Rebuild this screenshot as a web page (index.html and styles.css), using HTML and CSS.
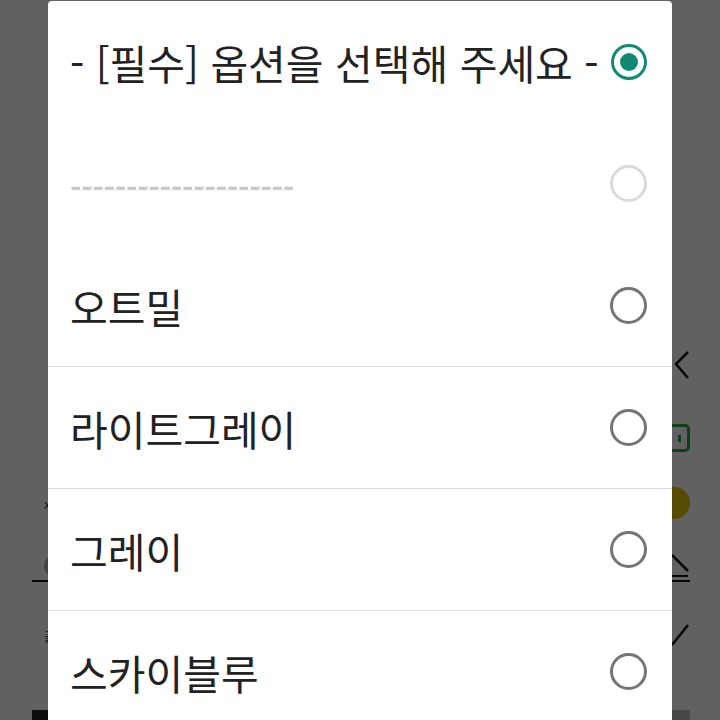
FILE: index.html
```html
<!DOCTYPE html>
<html lang="ko">
<head>
  <meta charset="UTF-8">
  <meta name="viewport" content="width=device-width, initial-scale=1.0">
  <title>옵션 선택</title>
  <link rel="stylesheet" href="styles.css">
</head>
<body>

  <div class="page">
    <div class="page-row row-a">
      <span class="note">&nbsp;</span>
      <svg class="chev" width="16" height="32" viewBox="0 0 16 32"><path d="M14 2 L2 14 L14 28" fill="none" stroke="#111" stroke-width="2.5"/></svg>
    </div>
    <div class="page-row row-b">
      <span class="note">&nbsp;</span>
      <span class="coupon"><span class="coupon-dot"></span></span>
    </div>
    <div class="page-row row-c">
      <span class="note small">x</span>
      <span class="sun"></span>
    </div>
    <div class="page-row row-d">
      <span class="avatar"></span>
      <svg class="chev" width="18" height="26" viewBox="0 0 18 26"><path d="M0 2 L16 18" fill="none" stroke="#111" stroke-width="2.5"/><path d="M0 23 L16 23" stroke="#111" stroke-width="2"/></svg>
    </div>
    <div class="rule"></div>
    <div class="page-row row-e">
      <span class="note small">출</span>
      <svg class="chev" width="18" height="24" viewBox="0 0 18 24"><path d="M16 2 L0 22" fill="none" stroke="#111" stroke-width="2.5"/></svg>
    </div>
    <div class="page-row row-f">
      <span class="bar"></span>
      <span class="bar light"></span>
    </div>
  </div>

  <div class="dim"></div>

  <div class="dialog">
    <div class="option">
      <span class="label">- [필수] 옵션을 선택해 주세요 -</span>
      <span class="radio checked"></span>
    </div>
    <div class="option">
      <span class="label dashes">--------------------</span>
      <span class="radio disabled"></span>
    </div>
    <div class="option lined">
      <span class="label">오트밀</span>
      <span class="radio"></span>
    </div>
    <div class="option lined">
      <span class="label">라이트그레이</span>
      <span class="radio"></span>
    </div>
    <div class="option lined">
      <span class="label">그레이</span>
      <span class="radio"></span>
    </div>
    <div class="option">
      <span class="label">스카이블루</span>
      <span class="radio"></span>
    </div>
  </div>

</body>
</html>
```

FILE: styles.css
```css
body {
  margin: 0;
  width: 720px;
  height: 720px;
  overflow: hidden;
  position: relative;
  background: #fff;
  font-family: "Noto Sans CJK KR", "Noto Sans", sans-serif;
}

/* page behind the dialog */
.page {
  display: flex;
  flex-direction: column;
  padding: 348px 30px 0 32px;
}
.page-row {
  display: flex;
  justify-content: space-between;
  align-items: center;
}
.row-a { height: 36px; }
.row-b { height: 28px; margin-top: 40px; }
.row-c { height: 34px; margin-top: 34px; }
.row-d { height: 28px; margin-top: 32px; }
.row-e { height: 26px; margin-top: 40px; }
.row-f { height: 10px; margin-top: 62px; align-items: stretch; }
.rule {
  height: 2px;
  background: #111;
}
.note {
  font-size: 12px;
  color: #333;
  margin-left: 12px;
}
.note.small {
  font-size: 13px;
}
.coupon {
  width: 34px;
  height: 22px;
  border: 3px solid #2eaa4a;
  border-radius: 5px;
  display: flex;
  align-items: center;
  justify-content: flex-end;
  padding-right: 6px;
}
.coupon-dot {
  width: 3px;
  height: 7px;
  background: #2eaa4a;
}
.sun {
  width: 32px;
  height: 32px;
  border-radius: 50%;
  background: #e3c400;
}
.avatar {
  width: 30px;
  height: 24px;
  margin-left: 12px;
  border-radius: 50%;
  background: #aaa;
}
.bar {
  width: 40px;
  background: #222;
}
.bar.light {
  width: 30px;
  background: #bbb;
}

.dim {
  position: absolute;
  inset: 0;
  background: rgba(0, 0, 0, 0.62);
}

/* dialog */
.dialog {
  position: absolute;
  left: 48px;
  top: 1px;
  width: 624px;
  bottom: 0;
  background: #fff;
  border-radius: 4px 4px 0 0;
  overflow: hidden;
}
.option {
  height: 121px;
  border-bottom: 1px solid transparent;
  display: flex;
  align-items: center;
  justify-content: space-between;
  padding: 0 25px 0 22px;
}
.option.lined {
  border-bottom-color: #dcdcdc;
}
.label {
  font-size: 41px;
  color: #222;
  white-space: nowrap;
}
.dashes {
  font-size: 31px;
  color: #c9c9c9;
  letter-spacing: -0.3px;
  font-weight: bold;
  padding-top: 6px;
}
.radio {
  width: 31px;
  height: 31px;
  border: 3px solid #757575;
  border-radius: 50%;
  display: flex;
  align-items: center;
  justify-content: center;
}
.radio.checked {
  border-color: #128a73;
  border-width: 3.5px;
  width: 30px;
  height: 30px;
}
.radio.checked::after {
  content: "";
  width: 18px;
  height: 18px;
  border-radius: 50%;
  background: #128a73;
}
.radio.disabled {
  border-color: #dadada;
}
```
